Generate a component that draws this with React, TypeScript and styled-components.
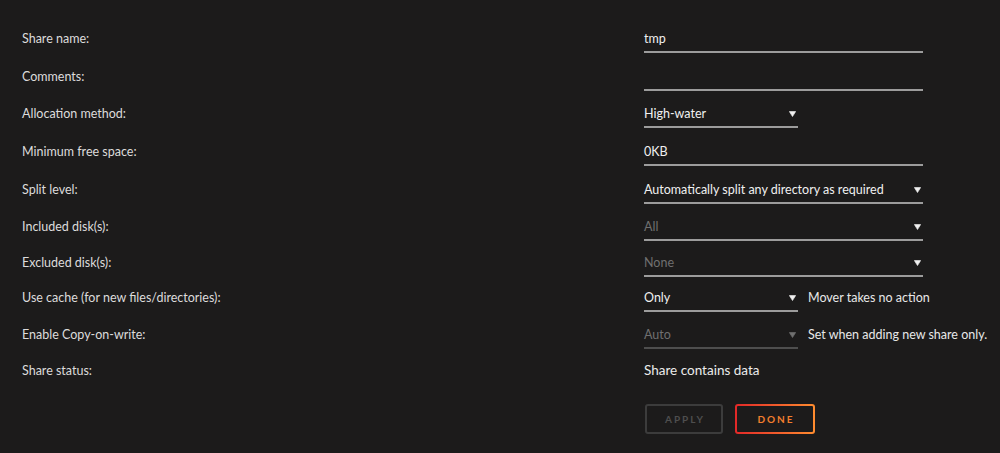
import React from "react";
import styled, { createGlobalStyle } from "styled-components";

const Global = createGlobalStyle`
  html, body { margin: 0; padding: 0; background: #1c1b1b; }
  body { font-family: Lato, "Open Sans", sans-serif; color: #e4e4e4; }
`;

const Page = styled.div`
  width: 1000px;
  height: 453px;
  background: #1c1b1b;
  box-sizing: border-box;
  padding-top: 27px;
  display: flex;
  flex-direction: column;
`;

const Row = styled.div<{ $gap: number }>`
  display: grid;
  grid-template-columns: 622px auto;
  align-items: start;
  height: 26px;
  margin-top: ${(p) => p.$gap}px;
  padding-left: 22px;
`;

const Label = styled.div`
  font-size: 12.5px;
  color: #dcdcdc;
  height: 23px;
  line-height: 23px;
`;

const Cell = styled.div`
  display: flex;
  align-items: flex-start;
  gap: 10px;
`;

const Field = styled.div<{ $w: number; $dim?: boolean }>`
  width: ${(p) => p.$w}px;
  height: 26px;
  box-sizing: border-box;
  border-bottom: 2px solid ${(p) => (p.$dim ? "#4e4e4e" : "#9c9c9c")};
  padding-bottom: 1px;
  display: flex;
  align-items: center;
  justify-content: space-between;
  font-size: 12.5px;
  padding-right: 2px;
`;

const Hint = styled.span`
  font-size: 12.5px;
  color: #e8e8e8;
  line-height: 23px;
`;

const Status = styled.span`
  font-size: 13.5px;
  color: #ececec;
  line-height: 23px;
`;

const Buttons = styled.div`
  display: flex;
  gap: 12px;
  padding-left: 645px;
  margin-top: 19px;
`;

const Btn = styled.button<{ $primary?: boolean }>`
  width: ${(p) => (p.$primary ? 80 : 78)}px;
  height: 30px;
  box-sizing: border-box;
  background: #1c1b1b;
  font-family: Lato, "Open Sans", sans-serif;
  font-weight: 700;
  font-size: 10px;
  letter-spacing: 2px;
  text-indent: 2px;
  border-radius: 3px;
  cursor: pointer;
  padding: 0;
  ${(p) =>
    p.$primary
      ? `
    border: 2px solid transparent;
    background: linear-gradient(#1c1b1b, #1c1b1b) padding-box, linear-gradient(90deg, #e22828, #ff8c2f) border-box;
    color: #f27e2e;
  `
      : `
    border: 2px solid #3c3c3c;
    color: #4e4e4e;
  `}
`;

const Arrow = ({ dim }: { dim?: boolean }) => (
  <svg width="7" height="6" viewBox="0 0 7 6" style={{ flexShrink: 0 }}>
    <path
      d="M0.3 0.5 H6.7 L3.5 5.6 Z"
      fill={dim ? "#707070" : "#f0f0f0"}
      strokeLinejoin="round"
      stroke={dim ? "#707070" : "#f0f0f0"}
      strokeWidth="0.6"
    />
  </svg>
);

type R = {
  label: string;
  value?: string;
  w?: number;
  gap: number;
  select?: boolean;
  dim?: boolean;
  lineDim?: boolean;
  hint?: string;
};

const rows: R[] = [
  { label: "Share name:", value: "tmp", w: 279, gap: 0 },
  { label: "Comments:", value: "", w: 279, gap: 12 },
  { label: "Allocation method:", value: "High-water", w: 154, select: true, gap: 11 },
  { label: "Minimum free space:", value: "0KB", w: 279, gap: 12 },
  { label: "Split level:", value: "Automatically split any directory as required", w: 279, select: true, gap: 12 },
  { label: "Included disk(s):", value: "All", w: 279, select: true, dim: true, gap: 11 },
  { label: "Excluded disk(s):", value: "None", w: 279, select: true, dim: true, gap: 10 },
  { label: "Use cache (for new files/directories):", value: "Only", w: 154, select: true, hint: "Mover takes no action", gap: 9 },
  {
    label: "Enable Copy-on-write:",
    value: "Auto",
    w: 154,
    select: true,
    dim: true,
    lineDim: true,
    hint: "Set when adding new share only.",
    gap: 11,
  },
];

const Text = styled.span<{ $dim?: boolean }>`
  color: ${(p) => (p.$dim ? "#707070" : "#f0f0f0")};
`;

export default function App() {
  return (
    <>
      <Global />
      <Page>
        {rows.map((r) => (
          <Row key={r.label} $gap={r.gap}>
            <Label>{r.label}</Label>
            <Cell>
              <Field $w={r.w!} $dim={r.lineDim}>
                <Text $dim={r.dim}>{r.value}</Text>
                {r.select && <Arrow dim={r.lineDim} />}
              </Field>
              {r.hint && <Hint>{r.hint}</Hint>}
            </Cell>
          </Row>
        ))}
        <Row $gap={10}>
          <Label>Share status:</Label>
          <Cell>
            <Status>Share contains data</Status>
          </Cell>
        </Row>
        <Buttons>
          <Btn>APPLY</Btn>
          <Btn $primary>DONE</Btn>
        </Buttons>
      </Page>
    </>
  );
}
